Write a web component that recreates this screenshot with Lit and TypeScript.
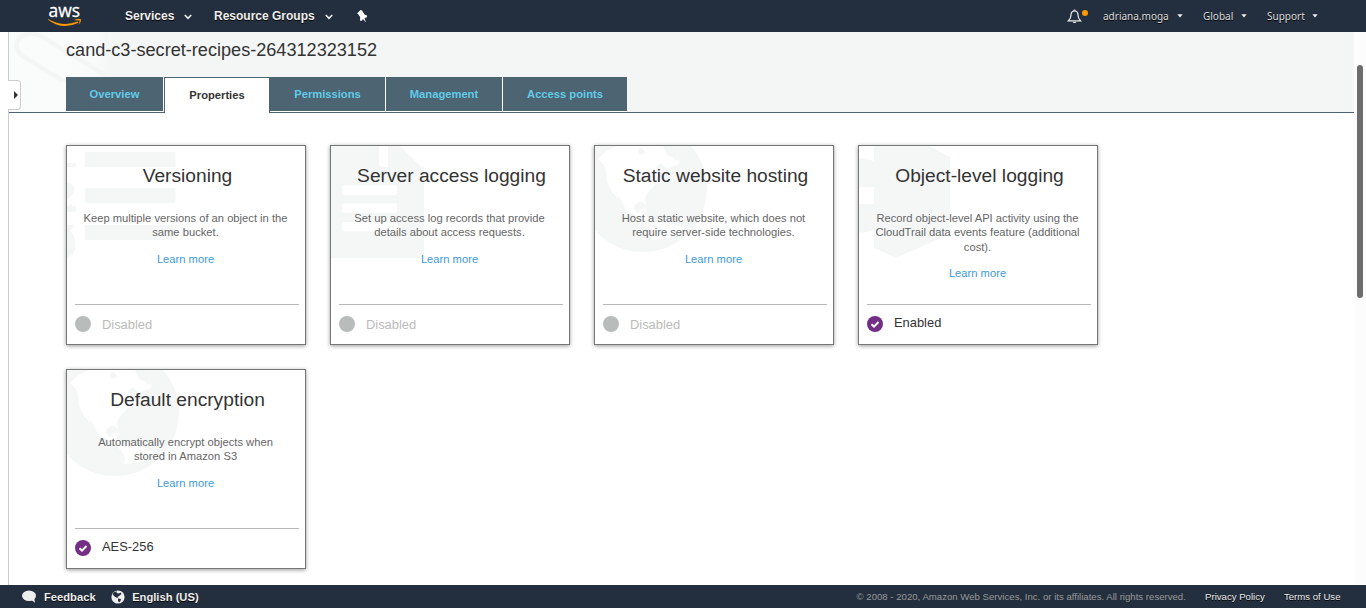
import { LitElement, html, svg, css, nothing } from "lit";
import { customElement, property } from "lit/decorators.js";

const art: Record<string, unknown> = {
  list: svg`<g fill="#f5f7f7">
    <rect x="18" y="6" width="90.500" height="15" rx="1.5"></rect>
    <rect x="18" y="42" width="90.500" height="15" rx="1.5"></rect>
    <rect x="18" y="79" width="90.500" height="15" rx="1.5"></rect>
    <rect x="0" y="17" width="9" height="4"></rect>
    <path d="M0 37 Q7 38 7.500 43 Q7 48 0 54Z"></path>
    <path d="M0 60 H3 V58 H5 V60 H9 V66 H0Z"></path>
    <path d="M0 79 H8 L3 85 Q9 89 8.500 102 Q7 109 0 112Z"></path></g>`,
  document: svg`<g fill="#f5f7f7"><path d="M0 0H48V17Q48 21 52 21H93V112H0Z"></path></g>
    <path fill="#fff" d="M48 0H57V21H90L69 0H93V21H52Q48 21 48 17Z"></path><path fill="#f5f7f7" d="M57 0H69L90 21H57Z"></path>
    <g fill="#fff"><rect x="11" y="39.500" width="55" height="9.500" rx="2"></rect><rect x="11" y="57.500" width="55" height="9.500" rx="2"></rect><rect x="11" y="76" width="55" height="9.500" rx="2"></rect></g>`,
  globe: svg`<circle cx="48" cy="42" r="64" fill="#f5f7f7"></circle>
    <path fill="#fff" d="M3 13 L9 7 L17 2 L22 0 H68 L70 5 L73 10 L78 11 L80 14 L85 15 L83 19 L77 21 L71 22 L68 19 L65 17 L61 22 L63 28 L67 31 L69 35 L62 37 L58 41 L53 47 L50 51 L51 59 L48 56 L43 56 L39 60 L40 65 L44 67 L46 63 L52 63 L49 68 L53 71 L54 75 L58 77 L66 75 L78 78 L90 82 L83 88 L74 92 L66 93 L57 94 L58 88 L54 80 L50 77 L46 72 L38 68 L31 66 L29 59 L20 45 L24 54 L18 47 L12 36 L11 24 L8 18Z"></path>
    <path fill="#f5f7f7" d="M44 2L48 2.500L50 7L45 9L43 6Z"></path>`,
  cube: svg`<path fill="#f5f7f7" d="M15 0H70L91 11V88L37 112L15 102V84L3 87L0 86V58H15V41H0V13L3 12L15 15Z"></path>`,
};

const caret = html`<svg width="6" height="4" viewBox="0 0 6 4"><path d="M.3.3H5.700L3 3.500Z" fill="#eee"></path></svg>`;
const chevron = html`<svg class="chevron" width="8" height="6" viewBox="0 0 8 6"><path d="M.8 1L4 4.300L7.200 1" fill="none" stroke="#eee" stroke-width="1.600"></path></svg>`;

@customElement("property-card")
export class PropertyCard extends LitElement {
  @property() heading = "";
  @property() text = "";
  @property() status = "";
  @property() icon = "globe";
  @property({ type: Boolean }) on = false;

  static styles = css`
    :host { display: block; box-sizing: border-box; width: 240px; height: 200px; border: 1px solid #757778; background: #fff; box-shadow: 0 1px 4px rgba(0,0,0,.4); position: relative; }
    .art { position: absolute; left: 0; top: 0; width: 140px; height: 130px; }
    .body { position: relative; height: 159px; box-sizing: border-box; margin: 0 6px 0 8px; border-bottom: 1px solid #b7b9b9; padding-top: 18px; text-align: center; }
    h2 { margin: 0 0 0 1px; font-weight: 400; font-size: 19.200px; line-height: 24px; color: #333; white-space: nowrap; }
    p { margin: 23px 10.500px 0 7.500px; font-size: 11.200px; line-height: 14.300px; color: #666; }
    a { display: block; margin: 12px 3px 0 0; font-size: 11.200px; line-height: 14px; color: #4099d9; }
    .foot { display: flex; gap: 11px; padding: 11px 8px 0; font-size: 12.900px; line-height: 18px; color: #bbb; }
    .foot.on { color: #333; }
    .foot.on span { margin-top: -2px; }
  `;

  render() {
    return html`
      <svg class="art" viewBox="0 0 140 130">${art[this.icon]}</svg>
      <div class="body"><h2>${this.heading}</h2><p>${this.text}</p><a>Learn more</a></div>
      <div class="foot ${this.on ? "on" : ""}">
        <svg width="16" height="16" viewBox="0 0 16 16">
          <circle cx="8" cy="8" r="8" fill=${this.on ? "#732f86" : "#babcbc"}></circle>
          ${this.on ? svg`<path d="M4.500 8.300L7 10.600L11.500 6" fill="none" stroke="#fff" stroke-width="2"></path>` : nothing}
        </svg>
        <span>${this.status}</span>
      </div>`;
  }
}

@customElement("app-root")
export class AppRoot extends LitElement {
  static styles = css`
    :host { display: flex; flex-direction: column; width: 1366px; height: 608px; overflow: hidden; background: #fff; font-family: "Liberation Sans", Arial, sans-serif; color: #333; }
    .nav { flex: none; height: 32px; background: #232f3e; display: flex; align-items: center; color: #eee; text-shadow: 0 1px 0 #000; font-size: 12px; font-weight: 700; box-sizing: border-box; }
    .logo { width: 34px; height: 32px; margin-left: 48px; overflow: visible; }
    .logo text { font: 400 19px "Open Sans", sans-serif; text-shadow: none; stroke: #fff; stroke-width: .3px; }
    .menu { display: flex; align-items: center; justify-content: space-between; white-space: nowrap; }
    .chevron { margin-top: 2px; }
    .services { margin-left: 43px; width: 67px; }
    .groups { margin-left: 22px; width: 119px; }
    .pin { margin-left: 24px; }
    .account { margin-left: auto; margin-right: 48px; display: flex; align-items: center; font: 400 10px "Noto Sans", sans-serif; color: #ddd; }
    .user { margin-left: 14px; width: 79.500px; }
    .region { margin-left: 20.500px; width: 43.500px; }
    .support { margin-left: 20.500px; width: 51px; }
    .middle { flex: 1; min-height: 0; display: flex; }
    .rail { width: 8px; flex: none; border-right: 1px solid #ccc; }
    .page { flex: 1; min-width: 0; }
    .track { width: 12px; flex: none; background: #fcfcfc; padding: 33px 3px 0; box-sizing: border-box; }
    .thumb { height: 233px; border-radius: 3px; background: #6d6d6d; }
    .head { position: relative; height: 81px; box-sizing: border-box; border-bottom: 1px solid #4d6472; background: linear-gradient(90deg, #fafcfb 0, #f9fbfa 85px, #f4f6f6 105px); padding-left: 57px; }
    .clip { position: absolute; left: 0; top: 0; }
    .toggle { position: absolute; left: -1px; top: 48px; width: 13px; height: 30px; box-sizing: border-box; border: 1px solid #ccc; border-left: 0; border-radius: 0 4px 4px 0; background: #fff; display: flex; align-items: center; justify-content: flex-end; padding-right: 2px; }
    h1 { position: relative; margin: 0; padding-top: 6px; font-size: 18.120px; line-height: 24px; font-weight: 400; height: 45px; box-sizing: border-box; }
    .tabs { position: relative; display: flex; font-size: 11.200px; font-weight: 700; }
    .tab { box-sizing: border-box; height: 35px; border-right: 1px solid #fff; border-bottom: 1px solid #fff; background: #4d6472; background-clip: padding-box; color: #61cbe9; display: flex; align-items: center; justify-content: center; }
    .tab.active { height: 36px; background: #fff; color: #333; border: 1px solid #4d6472; border-bottom: 0; padding-bottom: 1px; }
    .t0 { width: 98px; } .t1 { width: 106px; } .t2 { width: 116px; } .t3 { width: 117px; } .t4 { width: 124px; border-right: 0; }
    .cards { display: grid; grid-template-columns: repeat(4, 240px); gap: 24px; padding: 32px 0 0 57px; }
    .footer { flex: none; height: 23px; background: #232f3e; display: flex; align-items: center; color: #eee; font-size: 11.200px; font-weight: 700; padding: 0 25.500px 0 22px; box-sizing: border-box; white-space: nowrap; text-shadow: 0 1px 0 #000; }
    .footer svg { flex: none; }
    .fb { margin-left: 8px; } .world { margin-left: 15.500px; } .lang { margin-left: 7px; }
    .legal { margin-left: auto; font-size: 9.620px; font-weight: 400; color: #999; text-shadow: none; }
    .link { margin-left: 19.200px; font-size: 9.600px; font-weight: 400; }
  `;

  render() {
    const tabs = ["Overview", "Properties", "Permissions", "Management", "Access points"];
    return html`
      <div class="nav">
        <svg class="logo" viewBox="0 0 34 32"><text x="0.5" y="16.5" fill="#fff" textLength="31.5" lengthAdjust="spacingAndGlyphs">aws</text>
          <path d="M0 19Q15 27.500 29.500 21.500L30.500 22.700Q14 30.500 0 19.700Z" fill="#f90"></path><path d="M26.500 19.700Q31 18 33 19.200Q33.500 22 30.500 25Q32 21.500 31.600 20.600Q30 20 26.500 20.300Z" fill="#f90"></path></svg>
        <div class="menu services"><span>Services</span>${chevron}</div>
        <div class="menu groups"><span>Resource Groups</span>${chevron}</div>
        <svg class="pin" width="11" height="13" viewBox="0 0 11 13"><path d="M3.500 0L5 .5L7.500 4.500L10 5.500V7.300L7.500 8L9 12.500L6 9L4.500 11L3 10.500L3.200 7L1 4L0 3.500Z" fill="#fff"></path></svg>
        <div class="account">
          <svg width="22" height="16" viewBox="0 0 22 16"><path d="M1.500 12.800Q4 10.500 4 7Q4 3 7.500 3Q11 3 11 7Q11 10.500 13.500 12.800Z" fill="none" stroke="#eee" stroke-width="1.200"></path><path d="M6.500 2.700Q7.500 1.300 8.500 2.700M6.200 13.800Q7.500 15.200 8.800 13.800" stroke="#eee" fill="none" stroke-width="1.200"></path><circle cx="18" cy="5" r="3" fill="#f90"></circle></svg>
          <div class="menu user"><span>adriana.moga</span>${caret}</div>
          <div class="menu region"><span>Global</span>${caret}</div>
          <div class="menu support"><span>Support</span>${caret}</div>
        </div>
      </div>
      <div class="middle">
        <div class="rail"></div>
        <div class="page">
          <div class="head">
            <svg class="clip" width="120" height="50" viewBox="0 0 120 50"><path d="M56 50L13 24Q5 16 9 8Q17 -2 32 4L96 43M97 0Q98 20 111 34Q113 42 104 44" fill="none" stroke="#f4f6f6" stroke-width="4.500"></path></svg>
            <div class="toggle"><svg width="4" height="8" viewBox="0 0 4 8"><path d="M0 0L4 4L0 8Z" fill="#333"></path></svg></div>
            <h1>cand-c3-secret-recipes-264312323152</h1>
            <div class="tabs">${tabs.map((t, i) => html`<div class="tab t${i} ${i === 1 ? "active" : ""}">${t}</div>`)}</div>
          </div>
          <div class="cards">
            <property-card icon="list" heading="Versioning" text="Keep multiple versions of an object in the same bucket." status="Disabled"></property-card>
            <property-card icon="document" heading="Server access logging" text="Set up access log records that provide details about access requests." status="Disabled"></property-card>
            <property-card icon="globe" heading="Static website hosting" text="Host a static website, which does not require server-side technologies." status="Disabled"></property-card>
            <property-card icon="cube" heading="Object-level logging" text="Record object-level API activity using the CloudTrail data events feature (additional cost)." status="Enabled" on></property-card>
            <property-card icon="globe" heading="Default encryption" text="Automatically encrypt objects when stored in Amazon S3" status="AES-256" on></property-card>
          </div>
        </div>
        <div class="track"><div class="thumb"></div></div>
      </div>
      <div class="footer">
        <svg width="14" height="13" viewBox="0 0 14 13"><ellipse cx="7" cy="5.800" rx="7" ry="5.200" fill="#eee"></ellipse><path d="M8 9L13 12.800L12 7Z" fill="#eee"></path></svg>
        <span class="fb">Feedback</span>
        <svg class="world" width="14" height="14" viewBox="0 0 14 14"><circle cx="7" cy="7" r="6.600" fill="#eee"></circle><path d="M1.500 4L3 2L6 1.500L5.500 3L8 3.500L9.500 2.500L10.500 4L8 6L6.500 7L7 8L5 7.500L3 6Z" fill="#232f3e"></path><path d="M7 8.500L10 9L9.500 11L8 12.500L7 10.500Z" fill="#232f3e"></path></svg>
        <span class="lang">English (US)</span>
        <span class="legal">© 2008 - 2020, Amazon Web Services, Inc. or its affiliates. All rights reserved.</span>
        <span class="link">Privacy Policy</span><span class="link">Terms of Use</span>
      </div>`;
  }
}
